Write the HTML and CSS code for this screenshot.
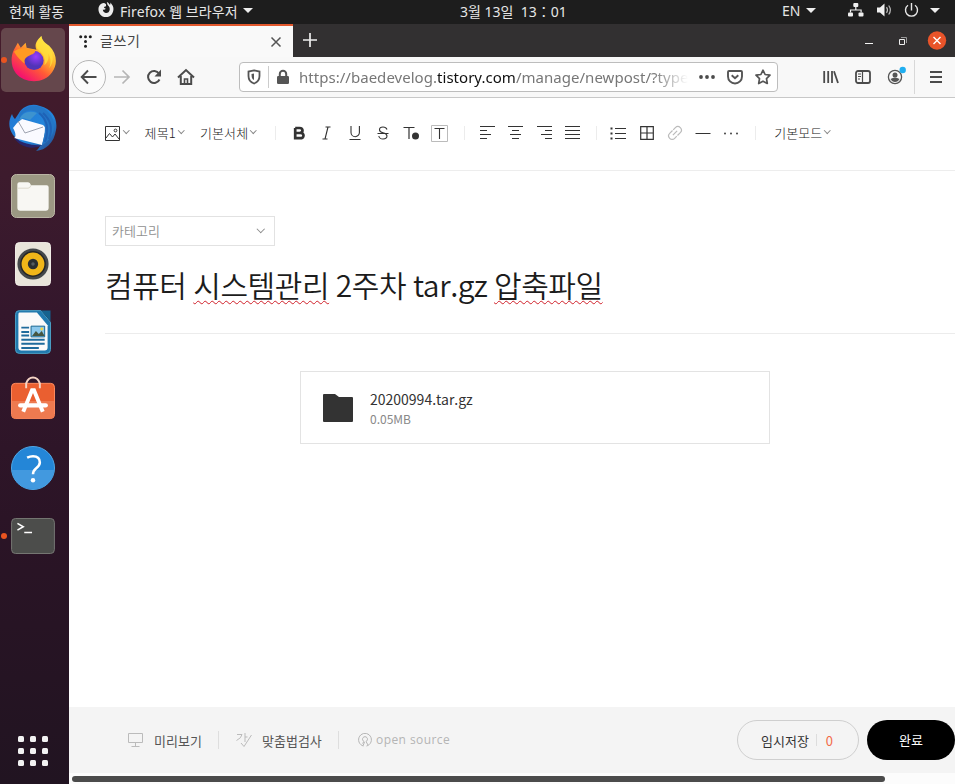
FILE: index.html
```html
<!DOCTYPE html>
<html lang="ko">
<head>
<meta charset="utf-8">
<title>글쓰기</title>
<link rel="stylesheet" href="styles.css">
</head>
<body>
<header class="panel">
  <span class="t-act">현재 활동</span>
  <svg width="16" height="18" viewBox="0 0 16 18"><path d="M8 3.2C6.800 1.800 5 1.500 3.800 2.600L2.600 3.200C0 5.300-.3 10 2 13.200c3 4 9 3.800 12-.3 2-3 2.100-7.500-.7-10.100L12.700 1.600 12 4C10.800 2 9.500 1.200 8.800 1c.4 1.100.3 2 .9 3 .8 1 2.200 2 2 4.400-.2 2.500-2 3.700-3.900 3.500-2-.2-3.100-1.800-2.900-3.500 1 .7 2.100.1 3-.6-1-.3-2-.9-2-1.800L8 5.200z" fill="#ededed"/></svg>
  <span class="t-app">Firefox 웹 브라우저</span>
  <i class="tri"></i>
  <span class="t-clock">3월 13일&nbsp; 13：01</span>
  <span class="t-en">EN</span>
  <i class="tri"></i>
  <svg width="16" height="16" viewBox="0 0 16 16"><g fill="#f0f0f0"><rect x="5.300" y="1" width="5" height="4" rx="1"/><rect x="0" y="10.500" width="5" height="4" rx="1"/><rect x="10.500" y="10.500" width="5" height="4" rx="1"/></g><path d="M7.800 5v3M2.500 10.500V8h10.600v2.500" stroke="#f0f0f0" stroke-width="1.200" fill="none"/></svg>
  <svg width="16" height="16" viewBox="0 0 16 16"><path d="M0 5.500h3L7.500 1.500v13L3 10.500H0z" fill="#f0f0f0"/><path d="M9.500 5.200q2 2.800 0 5.600M11.700 3.500q3.300 4.500 0 9" stroke="#bbb" fill="none" stroke-width="1.200"/></svg>
  <svg width="15" height="16" viewBox="0 0 15 16"><path d="M4 3.300a6 6 0 1 0 7 0M7.500 1v7.500" stroke="#e8e8e8" fill="none" stroke-width="1.400"/></svg>
  <i class="tri"></i>
</header>
<div class="desk">
  <nav class="dock">
    <div class="slot active"><b class="dot"></b><svg width="47" height="47" viewBox="0 0 48 48">
      <defs><linearGradient id="ff" x1=".85" y1=".1" x2=".25" y2=".9"><stop offset="0" stop-color="#fff44f"/><stop offset=".35" stop-color="#ffb52b"/><stop offset=".65" stop-color="#ff5b36"/><stop offset="1" stop-color="#f5156c"/></linearGradient><radialGradient id="pu" cx=".6" cy=".3"><stop offset="0" stop-color="#9a3cff"/><stop offset="1" stop-color="#5134b8"/></radialGradient></defs>
      <path d="M27 15C24 9 29 4 32 1c1 5 4 7 8 10 8 8 9 19 3 27-8 12-28 12-37 1C0 31 1 21 4 15L8 8l3 5 5-5 1 5z" fill="url(#ff)"/><path d="M32 1c-3 4-7 8-4 13 5 4 9 9 7 17 4-3 5-8 4-12 3 5 3 10 1 15 6-7 4-17-1-22-4-3-6-5-7-11z" fill="#ffe23d" opacity=".75"/><circle cx="24.500" cy="26" r="9.800" fill="url(#pu)"/><path d="M4 17c4-3 9-4 14-3l7 1c2 1 0 4-3 5l-4 2c-3 2-4 4-3 7-4-3-7-6-11-12z" fill="#ff9a22"/></svg></div>
    <div class="slot"><svg width="48" height="48" viewBox="0 0 48 48">
      <defs><linearGradient id="tb" x1="0" x2="1" y2="1"><stop offset="0" stop-color="#2477d1"/><stop offset=".6" stop-color="#2386dc"/><stop offset="1" stop-color="#28417f"/></linearGradient></defs>
      <path d="M10 9C14 2 23-1 31 2c13 3 18 14 16 24-2 13-10 20-20 21 2-2 3-3 4-5-8 2-17 0-22-6C0 29-2 19 3 10c1 3 2 4 3 5z" fill="url(#tb)"/><path d="M8 19l5-4 21 6 3 3-4 17L5 34c3-1 1-7-1-10z" fill="#fafaff"/><path d="M9 17l7 12 18-6" fill="none" stroke="#888d9c" stroke-width=".8"/><path d="M10 17C12 6 23 4 29 9c9 6 8 19 4 32 13-7 16-23 7-32C33-1 15 0 10 11z" fill="#2476c6"/><path d="M10 17C12 9 20 6 28 9L21 16 14 14z" fill="#3d93cf"/><path d="M30 9c9 7 10 17 6 29M34 9c9 8 9 18 6 26" fill="none" stroke="#1e62b7" stroke-width="2"/><path d="M5 34c9 5 18 8 28 7-9 5-21 3-28-7z" fill="#27256b"/></svg></div>
    <div class="slot"><svg width="44" height="44" viewBox=".5 .5 45 45"><rect x="1" y="1" width="44" height="44" rx="5" fill="#9c9883" stroke="#bdb8a7"/><path d="M7 11q0-2 2-2h9q2 0 3 3H37q2 0 2 2v21q0 3-3 3H10q-3 0-3-3z" fill="#f8f7f3"/><path d="M7 15h11q2 0 3-3" stroke="#dcd9cc" fill="none"/></svg></div>
    <div class="slot"><svg width="36" height="44" viewBox=".5 .5 37 45"><rect x="1" y="1" width="36" height="44" rx="4" fill="#e9e5da" stroke="#f4f0e9"/><circle cx="19" cy="23" r="16" fill="#44484a"/><circle cx="19" cy="23" r="12.500" fill="#f0b619" stroke="#252525" stroke-width="1.500"/><circle cx="19" cy="23" r="5.300" fill="#292e31"/><circle cx="19" cy="23" r="1.800" fill="#555c60"/></svg></div>
    <div class="slot"><svg width="36" height="44" viewBox=".5 .5 37 45"><path d="M5 1h22l10 12v28q0 4-4 4H5q-4 0-4-4V5q0-4 4-4z" fill="#2079ae" stroke="#4b9fc4"/><path d="M27 1h10v11z" fill="#15638f"/><path d="M5 3h18l11 13v23q0 3-3 3H7q-3 0-3-3V5q0-2 1-2z" fill="#fafafa"/><path d="M7 18.500h8M7 23h8M7 26.500h8M7 31h24M7 35h24M7 39.500h18" stroke="#1f6b9c" stroke-width="2"/><path d="M17 17h14v11H17z" fill="#8bc8ec" stroke="#16658f"/><path d="M18 27l4-5 3 3 3-3 3 5z" fill="#465641"/><circle cx="28" cy="20" r="1.500" fill="#f4d643"/></svg></div>
    <div class="slot bag"><svg width="44" height="44" viewBox=".5 .5 45 45"><rect x="1" y="8" width="44" height="36" rx="4" fill="#ea5f30" stroke="#ff8b5f"/><path d="M1.500 26h43v14q0 4-4 4h-35q-4 0-4-4z" fill="#ee7a50"/><path d="M16 13V8q2-6 7-6t7 6v5" fill="none" stroke="#f5d4c5" stroke-width="2"/><path d="M13 37l9-22h2l9 22" stroke="#fff" stroke-width="4" fill="none"/><path d="M10 30.500h26" stroke="#fff" stroke-width="4.500" stroke-linecap="round"/></svg></div>
    <div class="slot"><svg width="44" height="44" viewBox=".5 .5 45 45"><circle cx="23" cy="23" r="22" fill="#2486d7" stroke="#50a9e8"/><path d="M1.500 25h43q-2 17-19 19.500Q4 45 1.500 25z" fill="#4299df"/><path d="M17 12.500q3-1.500 6-1.500 7 0 7 6.500 0 3-4 6-3 2.500-3 6" fill="none" stroke="#fff" stroke-width="2.600"/><circle cx="23" cy="35.500" r="2.300" fill="#fff"/></svg></div>
    <div class="slot"><b class="dot"></b><svg width="44" height="36" viewBox=".5 .5 45 37"><rect x="1" y="1" width="44" height="36" rx="4" fill="#4c4d4b" stroke="#777874"/><path d="M7 6l6 3.500L7 13M14 15.500h8" fill="none" stroke="#fff" stroke-width="1.600"/></svg></div>
    <div class="apps"><i></i><i></i><i></i><i></i><i></i><i></i><i></i><i></i><i></i></div>
  </nav>
  <main class="win">
    <div class="tabs">
      <div class="tab">
        <svg width="13" height="13" viewBox="0 0 13 13" fill="#222"><circle cx="1.700" cy="1.700" r="1.500"/><circle cx="6.500" cy="1.700" r="1.500"/><circle cx="11.300" cy="1.700" r="1.500"/><circle cx="6.500" cy="6.500" r="1.500"/><circle cx="6.500" cy="11.200" r="1.500"/></svg>
        <span>글쓰기</span>
        <svg width="12" height="12" viewBox="0 0 12 12"><path d="M1.500 1.500l9 9m0-9l-9 9" stroke="#555" stroke-width="1.500"/></svg>
      </div>
      <svg class="plus" width="16" height="16" viewBox="0 0 16 16"><path d="M8 1v14M1 8h14" stroke="#eee" stroke-width="1.700"/></svg>
      <svg class="wm" width="84" height="20" viewBox="0 0 84 20"><path d="M2 12.500h8" stroke="#f4f4f4"/><path d="M36.500 8.500h5v5h-5z" fill="none" stroke="#eee"/><path d="M38 6.500h5.500V12" fill="none" stroke="#999"/><circle cx="74" cy="9.500" r="9.200" fill="#e9542a"/><path d="M70.500 6l7 7m0-7l-7 7" stroke="#fff" stroke-width="1.400"/></svg>
    </div>
    <div class="nav">
      <span class="back"><svg width="18" height="16" viewBox="0 0 18 16"><path d="M8 1.500L1.700 8 8 14.500M2 8h14.500" fill="none" stroke="#4b4b4b" stroke-width="1.900"/></svg></span>
      <svg width="18" height="16" viewBox="0 0 18 16"><path d="M9.500 1.500L16 8 9.500 14.500M15.500 8H1" fill="none" stroke="#b5b5b5" stroke-width="1.700"/></svg>
      <svg width="18" height="18" viewBox="0 0 18 18"><path d="M14.500 11.500A6 6 0 1 1 14 5.500" fill="none" stroke="#4b4b4b" stroke-width="2"/><path d="M16 1.500v7H9.500z" fill="#4b4b4b"/></svg>
      <svg width="18" height="18" viewBox="0 0 18 18"><path d="M1 9.500l8-7.500 8 7.500M3.800 8v8h10.400V8" fill="none" stroke="#4b4b4b" stroke-width="2"/><path d="M7.500 16v-5h3v5" fill="none" stroke="#4b4b4b" stroke-width="1.600"/></svg>
      <div class="url">
        <svg width="14" height="16" viewBox="0 0 14 16"><path d="M7 1.300L12.500 2.500V7c0 4-2.500 6.500-5.500 7.500C4 13.500 1.500 11 1.500 7V2.500z" fill="none" stroke="#555" stroke-width="1.800"/><path d="M7 4.500v6.500C5 10 4.500 8.500 4.500 5z" fill="#555"/></svg>
        <i class="bar"></i>
        <svg width="12" height="16" viewBox="0 0 12 16"><rect y="7" width="12" height="8" rx="1.200" fill="#555"/><path d="M2.800 7.500V5a3.200 3.200 0 0 1 6.400 0v2.500" fill="none" stroke="#555" stroke-width="2"/></svg>
        <span class="addr">https://baedevelog.<b>tistory.com</b>/manage/newpost/?type</span>
        <svg class="dots" width="16" height="6" viewBox="0 0 16 6" fill="#4b4b4b"><circle cx="2" cy="3" r="1.900"/><circle cx="8" cy="3" r="1.900"/><circle cx="14" cy="3" r="1.900"/></svg>
        <svg width="16" height="16" viewBox="0 0 16 16"><path d="M2 2h12q1 0 1 1v4.500a7 7 0 0 1-14 0V3q0-1 1-1z" fill="none" stroke="#555" stroke-width="1.900"/><path d="M4.700 6.200L8 9.300l3.300-3.100" fill="none" stroke="#555" stroke-width="1.900"/></svg>
        <svg width="16" height="16" viewBox="0 0 16 16"><path d="M8 1.200l2.100 4.300 4.900.7-3.500 3.400.8 4.900L8 12.200l-4.300 2.300.8-4.900L1 6.200l4.900-.7z" fill="none" stroke="#555" stroke-width="1.700" stroke-linejoin="round"/></svg>
      </div>
      <svg class="lib" width="16" height="14" viewBox="0 0 16 14"><path d="M1.200 1v12M5.200 1v12M9 1v12M11 1.300L15 13" stroke="#4b4b4b" stroke-width="1.800"/></svg>
      <svg width="16" height="14" viewBox="0 0 16 14"><rect x="1" y="1" width="14" height="12" rx="2" fill="none" stroke="#4b4b4b" stroke-width="1.800"/><path d="M7.500 1v12M3 4h3M3 6.500h3M3 9h2" stroke="#4b4b4b" stroke-width="1.200"/></svg>
      <svg width="20" height="20" viewBox="0 0 20 20"><circle cx="8" cy="12" r="6.600" fill="none" stroke="#555" stroke-width="1.300"/><circle cx="8" cy="10" r="2.500" fill="#555"/><path d="M3.500 14q4.500-3 9 0-1.500 3-4.500 3t-4.500-3z" fill="#555"/><circle cx="15.700" cy="5" r="3.200" fill="#20aef0"/></svg>
      <i class="rule"></i>
      <svg width="14" height="12" viewBox="0 0 14 12"><path d="M1 1h12M1 6h12M1 11h12" stroke="#4b4b4b" stroke-width="1.800"/></svg>
    </div>
    <div class="tools">
      <svg width="15" height="15" viewBox="0 0 15 15"><path d="M.5.500h14v14H.5zM1 12l3.500-4.500 3 3.500 2.500-3L14 13" fill="none" stroke="#333"/><circle cx="10.500" cy="4.500" r="1.400" fill="none" stroke="#333"/></svg>
      <i class="chev c1"></i>
      <span class="w1">제목1</span><i class="chev c2"></i>
      <span class="w2">기본서체</span><i class="chev c3"></i>
      <i class="sep s1"></i>
      <div class="grp">
        <svg width="16" height="16" viewBox="0 0 16 16"><path d="M4.200 3H8.500q3 0 3 2.500T8.500 8H4.200h5q3.300 0 3.300 2.600T9 13.200H4.200V3" fill="none" stroke="#333" stroke-width="2.700"/></svg>
        <svg width="16" height="16" viewBox="0 0 16 16"><path d="M6.500 2h5M3.500 14h5M9 2L6 14" fill="none" stroke="#333" stroke-width="1.100"/></svg>
        <svg width="16" height="16" viewBox="0 0 16 16"><path d="M4 1v6.500a4.200 4.200 0 0 0 8.400 0V1M2.500 14.500h11" fill="none" stroke="#333" stroke-width="1.100"/></svg>
        <svg width="16" height="16" viewBox="0 0 16 16"><path d="M12 4.500Q11 2 8 2 4.500 2 4.500 4.800 4.500 7 8 7.800t4 3q0 3.200-4 3.200-3.500 0-4.200-3M2.500 8.500h11" fill="none" stroke="#333" stroke-width="1.100"/></svg>
        <svg width="16" height="16" viewBox="0 0 16 16"><path d="M.5 2.500h11M6 2.500V14" fill="none" stroke="#333" stroke-width="1.200"/><circle cx="12.500" cy="11" r="3.500" fill="#333"/></svg>
        <svg width="17" height="17" viewBox="0 0 17 17"><path d="M.5.500h16v16H.5z" fill="none" stroke="#bbb"/><path d="M3.500 3.500h10M8.500 3.500V14" fill="none" stroke="#333" stroke-width="1.100"/></svg>
      </div>
      <i class="sep"></i>
      <div class="grp g2">
        <svg width="15" height="14" viewBox="0 0 15 14"><path d="M0 .5h15M0 4.500h7M0 8.500h11M0 12.500h7" stroke="#333"/></svg>
        <svg width="15" height="14" viewBox="0 0 15 14"><path d="M0 .5h15M4 4.500h7M2 8.500h11M4 12.500h7" stroke="#333"/></svg>
        <svg width="15" height="14" viewBox="0 0 15 14"><path d="M0 .5h15M8 4.500h7M4 8.500h11M8 12.500h7" stroke="#333"/></svg>
        <svg width="15" height="14" viewBox="0 0 15 14"><path d="M0 .5h15M0 4.500h15M0 8.500h15M0 12.500h15" stroke="#333"/></svg>
      </div>
      <i class="sep"></i>
      <div class="grp g3">
        <svg width="16" height="14" viewBox="0 0 16 14"><path d="M5 2.500h11M5 7.500h11M5 12.500h11" stroke="#333"/><path d="M.5 2.500h2M.5 7.500h2M.5 12.500h2" stroke="#333" stroke-width="2"/></svg>
        <svg width="14" height="14" viewBox="0 0 14 14"><path d="M.7.700h12.600v12.600H.7zM7 1v12M1 7h12" fill="none" stroke="#333" stroke-width="1.200"/></svg>
        <svg width="16" height="16" viewBox="0 0 16 16"><g transform="rotate(-45 8 8)" fill="none" stroke="#bbb" stroke-width="1.200"><path d="M7 11.500H4a3.500 3.500 0 0 1 0-7h4M9 4.500h3a3.500 3.500 0 0 1 0 7H8M5 8h6"/></g></svg>
        <svg width="16" height="14" viewBox="0 0 16 14"><path d="M.5 7.500h15" stroke="#333"/></svg>
        <svg width="16" height="14" viewBox="0 0 16 14" fill="#444"><circle cx="2" cy="7.500" r="1"/><circle cx="8" cy="7.500" r="1"/><circle cx="14" cy="7.500" r="1"/></svg>
      </div>
      <i class="sep"></i>
      <span class="w3">기본모드</span><i class="chev c4"></i>
    </div>
    <section class="doc">
      <div class="cat"><span>카테고리</span><i class="chev"></i></div>
      <h1>컴퓨터 <u>시스템관리</u> 2주차 tar.gz <u>압축파일</u></h1>
      <div class="file">
        <svg width="30" height="28" viewBox="0 0 30 28"><path d="M1 0h11l4 3h13q1 0 1 1v23q0 1-1 1H1q-1 0-1-1V1q0-1 1-1z" fill="#333"/></svg>
        <div><p class="fn">20200994.tar.gz</p><p class="fs">0.05MB</p></div>
      </div>
    </section>
    <footer>
      <svg width="15" height="14" viewBox="0 0 15 14"><path d="M.5.500h14v9H.5zM7.500 9.500v4M3.500 13.500h8" fill="none" stroke="#bbb"/></svg>
      <span class="f1">미리보기</span><i class="fsep"></i>
      <svg class="spell" width="16" height="15" viewBox="0 0 16 15"><path d="M1 1.500h5Q5.500 5 .5 7.500M9 0v9M9 4h2.500M5 10l3 3.500L15.500 2" fill="none" stroke="#bbb"/></svg>
      <span class="f2">맞춤법검사</span><i class="fsep"></i>
      <svg class="os" width="14" height="14" viewBox="0 0 14 14"><path d="M5.500 13A6.400 6.400 0 1 1 8.500 13M4.500 10.500L6 8.500a2.500 2.500 0 1 1 2 0l2 3.500M6.500 9l-1.500 3.800" fill="none" stroke="#b5b5b5"/></svg>
      <span class="f3">open source</span>
      <div class="save"><span>임시저장</span><i></i><em>0</em></div>
      <div class="done">완료</div>
    </footer>
    <div class="scroll"><i></i></div>
  </main>
</div>
</body>
</html>
```
FILE: styles.css
```css
* { box-sizing: border-box; }
body { margin: 0; width: 955px; height: 784px; overflow: hidden; display: flex; flex-direction: column; font-family: "Noto Sans CJK KR", sans-serif; color: #333; }
span, p, h1, em { white-space: nowrap; }
svg { display: block; flex: none; }
i { display: block; flex: none; }
h1, p { margin: 0; font-weight: 400; }

.panel { height: 24px; flex: none; background: #1d1d1d; color: #e6e6e6; display: grid; grid-template-columns: 89px 22px 123px 217px 322px 24px 42px 29px 27px 26px 20px; padding-left: 9px; align-items: center; font-family: "Noto Sans", "Noto Sans CJK KR", sans-serif; font-size: 14px; line-height: 22px; }
.panel > svg { margin-top: -4px; }
.t-app { letter-spacing: .1px; }
.t-en { margin-top: -2px; }
.tri { width: 10px; height: 5px; background: #eee; clip-path: polygon(0 0, 100% 0, 50% 100%); margin-top: -3px; }

.desk { flex: 1; display: flex; min-height: 0; }
.dock { width: 69px; flex: none; background: linear-gradient(#451b2b 0, #3d1b2d 20%, #34172c 38%, #2b1426 65%, #211421 100%); padding-top: 2px; display: flex; flex-direction: column; }
.slot { height: 68px; width: 66px; position: relative; display: flex; align-items: center; justify-content: center; flex: none; }
.slot.active { height: 64px; width: 64px; margin: 2px 1px; background: #65474c; border-radius: 5px; padding-bottom: 3px; }
.slot.bag { padding-bottom: 4px; }
.dot { position: absolute; left: 1px; top: 31px; width: 6px; height: 6px; border-radius: 50%; background: #e95420; }
.slot.active .dot { left: 0; top: 29px; }
.apps { margin: auto 0 18px 18px; display: grid; grid-template-columns: repeat(3, 6px); gap: 6px; }
.apps i { width: 6px; height: 6px; background: #f2f2f2; border-radius: 1.500px; }

.win { flex: 1; min-width: 0; display: flex; flex-direction: column; background: #fff; }
.tabs { height: 33px; flex: none; background: #323031; display: flex; align-items: center; }
.tab { width: 224px; height: 33px; background: #f9f9f9; border-top: 2px solid #e2582d; display: flex; align-items: center; padding: 0 11px 0 10px; color: #444; font-size: 14px; }
.tab span { margin: -4px auto 0 8px; letter-spacing: .6px; }
.plus { margin: -1px auto 0 9px; }
.wm { margin-right: 8px; margin-top: 1px; }

.nav { height: 41px; flex: none; background: #f8f8f8; border-bottom: 1px solid #c8c8c8; display: flex; align-items: center; padding-left: 3px; }
.back { width: 34px; height: 34px; flex: none; border: 1px solid #b6b6b6; border-radius: 50%; background: #fbfbfb; display: flex; align-items: center; justify-content: center; margin-right: 7px; }
.nav > svg { margin-right: 14px; }
.url { width: 539px; height: 30px; margin: 0 45px 0 38px; border: 1px solid #bdbdbd; border-radius: 4px; background: #fff; display: flex; align-items: center; padding-left: 7px; flex: none; }
.nav > svg:nth-of-type(3) { margin-right: 6px; }
.bar { width: 1px; height: 22px; background: #ccc; margin: 0 8px 0 7px; }
.addr { width: 389px; margin-left: 10px; overflow: hidden; font: 15px/22px "Noto Sans", sans-serif; letter-spacing: .03px; color: #777; mask-image: linear-gradient(90deg, #000 91%, transparent 100%); }
.addr b { font-weight: 400; color: #111; }
.dots { margin: 0 12px 0 11px; }
.url > svg:last-child { margin-left: 12px; }
.nav > svg.lib { margin-right: 16px; }
.nav > svg.lib + svg { margin-right: 16px; }
.nav > svg.lib + svg + svg { margin-right: 7px; margin-top: -5px; }
.rule { width: 1px; height: 34px; background: #d8d8d8; margin-right: 14px; }

.tools { height: 73px; flex: none; border-bottom: 1px solid #ededed; display: flex; align-items: center; padding: 0 0 2px 36px; font-size: 13px; font-weight: 300; color: #222; }
.tools span { line-height: 20px; margin-top: -1px; }
.chev { width: 4.500px; height: 4.500px; border: solid #888; border-width: 0 1px 1px 0; transform: rotate(45deg); margin-top: -5px; }
.c1 { margin-left: 4px; margin-right: 16px; }
.w1 { width: 34px; letter-spacing: .2px; }
.c2 { margin-right: 17px; }
.w2 { width: 51px; letter-spacing: .1px; }
.c3 { margin-right: 19px; }
.w3 { width: 51px; margin-left: 9px; }
.sep { width: 1px; height: 14px; background: #ececec; margin: 0 9px 0 10px; }
.sep.s1 { margin-left: 0; }
.grp { display: grid; grid-auto-flow: column; grid-auto-columns: 28.200px; justify-items: center; align-items: center; }
.g3 { margin-left: -2px; }

.doc { flex: 1; padding: 45px 0 0 36px; }
.cat { width: 170px; height: 30px; border: 1px solid #e2e2e2; display: flex; align-items: center; justify-content: space-between; padding: 0 11px 1px 6px; font-size: 13px; font-weight: 350; color: #909090; }
.cat .chev { width: 5.500px; height: 5.500px; margin-top: -3px; }
h1 { font-size: 30px; line-height: 44px; font-weight: 350; color: #1c1c1c; padding-top: 16px; height: 88px; letter-spacing: -.42px; word-spacing: -1.300px; border-bottom: 1px solid #ececec; }
h1 u { text-decoration: underline wavy #d0202a 1px; text-underline-offset: 3px; text-decoration-skip-ink: none; }
.file { margin: 37px 0 0 195px; width: 470px; height: 73px; border: 1px solid #e3e3e3; display: flex; align-items: center; padding-left: 22px; gap: 17px; }
.file div { padding-top: 2px; }
.fn { font-size: 14px; line-height: 20px; color: #333; }
.fs { font-size: 12px; line-height: 20px; color: #888; }

footer { height: 66px; flex: none; background: #f4f4f4; display: flex; align-items: center; padding-left: 59px; font-size: 13px; color: #555; }
.f1 { width: 64px; margin-left: 11px; }
.f2 { width: 76px; margin-left: 10px; }
.spell { margin-left: 17px; }
.os { margin-left: 19px; }
.f3 { margin: -2px auto 0 4px; font: 12px "Open Sans", sans-serif; color: #b5b5b5; letter-spacing: .42px; }
.fsep { width: 1px; height: 18px; background: #dedede; }
.save { width: 122px; height: 40px; border: 1px solid #cfcfcf; border-radius: 20px; display: flex; align-items: center; padding-left: 23px; color: #333; }
.save i { width: 1px; height: 12px; background: #ddd; margin: 0 9px 0 7px; }
.save em { font-style: normal; color: #f36b48; }
.done { width: 88px; height: 40px; border-radius: 20px; background: #000; color: #fff; margin-left: 8px; text-align: center; line-height: 40px; }
.scroll { height: 11px; flex: none; background: #fcfcfc; padding: 3px 0 0 3px; }
.scroll i { width: 813px; height: 6px; border-radius: 3px; background: #4b4b4b; }
```
